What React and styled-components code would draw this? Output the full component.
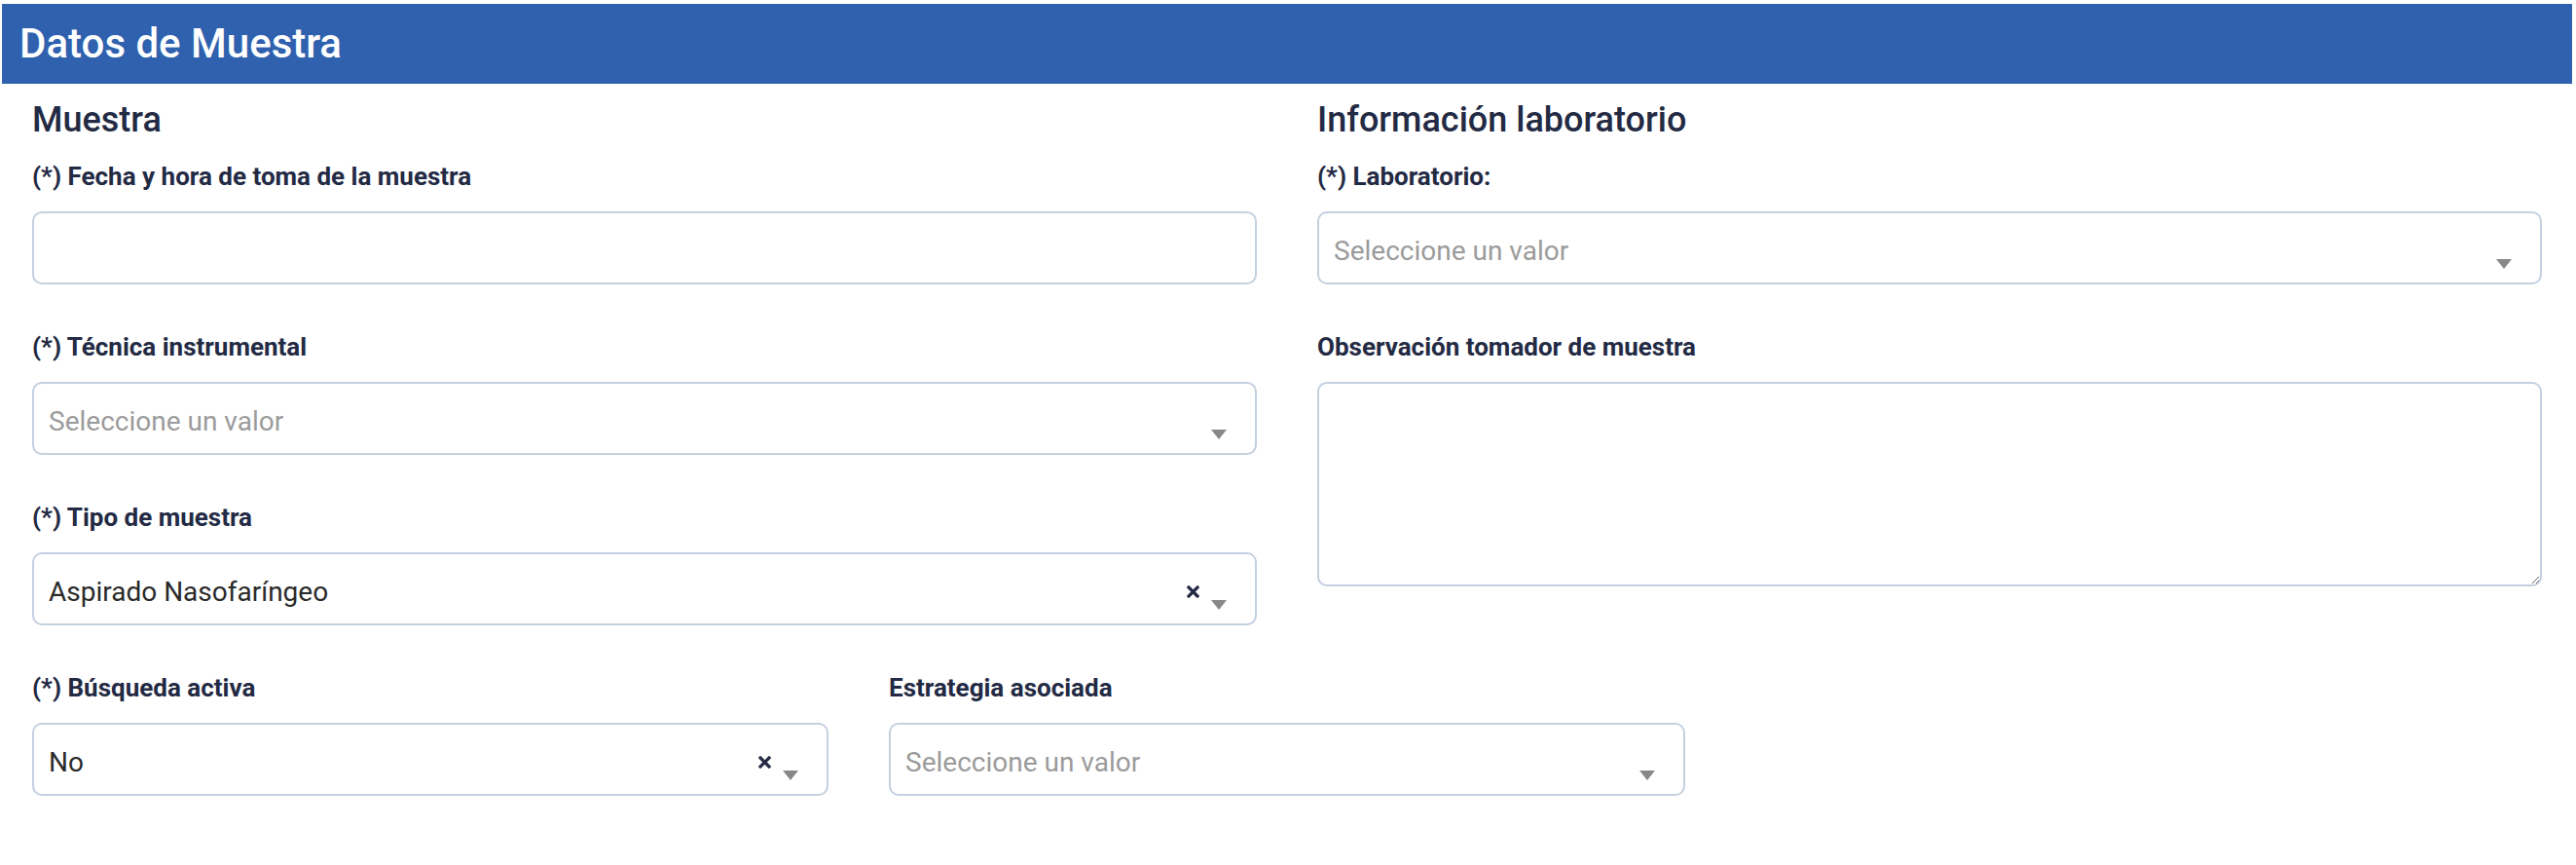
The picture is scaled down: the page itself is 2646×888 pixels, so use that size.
import React from 'react';
import styled, { createGlobalStyle } from 'styled-components';

const GlobalStyle = createGlobalStyle`
  body {
    margin: 0;
    background: #ffffff;
    font-family: Roboto, "Liberation Sans", sans-serif;
  }
  * {
    box-sizing: border-box;
  }
`;

const Page = styled.div`
  margin: 4px 4px 0 2px;
`;

const Banner = styled.div`
  height: 82px;
  background-color: #2f61ae;
  display: flex;
  align-items: center;
  padding-left: 18px;
`;

const BannerTitle = styled.h1`
  margin: 0;
  font-size: 42px;
  font-weight: 500;
  color: #ffffff;
  line-height: 50px;
`;

const Body = styled.div`
  padding: 16px 31px 0 31px;
  display: flex;
  flex-direction: column;
  gap: 49px;
`;

const TwoCols = styled.div`
  display: grid;
  grid-template-columns: 1fr 1fr;
  column-gap: 62px;
  align-items: start;
`;

const ThreeCols = styled.div`
  display: grid;
  grid-template-columns: 1fr 1fr 1fr;
  column-gap: 62px;
`;

const Column = styled.div`
  display: flex;
  flex-direction: column;
`;

const SectionTitle = styled.h2`
  margin: 0 0 22px 0;
  font-size: 36px;
  line-height: 42px;
  font-weight: 500;
  color: #232a44;
`;

const Fields = styled.div`
  display: flex;
  flex-direction: column;
  gap: 49px;
`;

const Field = styled.div`
  display: flex;
  flex-direction: column;
  gap: 21px;
`;

const Label = styled.label`
  font-size: 26px;
  line-height: 30px;
  font-weight: 700;
  color: #232a44;
`;

const TextBox = styled.input`
  height: 75px;
  width: 100%;
  border: 2px solid #c3d0df;
  border-radius: 10px;
  padding: 4px 15px 0;
  font-family: inherit;
  font-size: 28px;
  color: #2a2a2a;
  outline: none;
  background: #fff;
`;

const NoteBox = styled.textarea`
  height: 210px;
  width: 100%;
  border: 2px solid #c3d0df;
  border-radius: 10px;
  padding: 12px 15px;
  font-family: inherit;
  font-size: 28px;
  color: #2a2a2a;
  outline: none;
  resize: vertical;
  display: block;
`;

const SelectBox = styled.div`
  height: 75px;
  border: 2px solid #c3d0df;
  border-radius: 10px;
  background: #fff;
  display: flex;
  align-items: center;
  padding: 0 29px 0 15px;
`;

const SelectValue = styled.span`
  flex: 1;
  margin-top: 6px;
  font-size: 28px;
  font-weight: 400;
  color: ${(p) => (p.$placeholder ? '#9b9b9b' : '#2a2a2a')};
  white-space: nowrap;
  overflow: hidden;
`;

const Clear = styled.span`
  display: flex;
  margin-top: 5px;
  margin-right: 12px;
  cursor: pointer;
`;

const Caret = styled.span`
  width: 0;
  height: 0;
  margin-top: 33px;
  border-left: 8px solid transparent;
  border-right: 8px solid transparent;
  border-top: 10px solid #888888;
`;

const ClearIcon = () => (
  <svg width="13" height="13" viewBox="0 0 13 13">
    <path d="M2 2 L11 11 M11 2 L2 11" stroke="#232a44" strokeWidth="3.2" strokeLinecap="square" />
  </svg>
);

const Select = ({ value, placeholder = 'Seleccione un valor' }) => (
  <SelectBox>
    <SelectValue $placeholder={!value}>{value || placeholder}</SelectValue>
    {value && (
      <Clear>
        <ClearIcon />
      </Clear>
    )}
    <Caret />
  </SelectBox>
);

export default function App() {
  return (
    <>
      <GlobalStyle />
      <Page>
        <Banner>
          <BannerTitle>Datos de Muestra</BannerTitle>
        </Banner>
        <Body>
          <TwoCols>
            <Column>
              <SectionTitle>Muestra</SectionTitle>
              <Fields>
                <Field>
                  <Label>(*) Fecha y hora de toma de la muestra</Label>
                  <TextBox type="text" />
                </Field>
                <Field>
                  <Label>(*) Técnica instrumental</Label>
                  <Select />
                </Field>
                <Field>
                  <Label>(*) Tipo de muestra</Label>
                  <Select value="Aspirado Nasofaríngeo" />
                </Field>
              </Fields>
            </Column>
            <Column>
              <SectionTitle>Información laboratorio</SectionTitle>
              <Fields>
                <Field>
                  <Label>(*) Laboratorio:</Label>
                  <Select />
                </Field>
                <Field>
                  <Label>Observación tomador de muestra</Label>
                  <NoteBox />
                </Field>
              </Fields>
            </Column>
          </TwoCols>
          <ThreeCols>
            <Field>
              <Label>(*) Búsqueda activa</Label>
              <Select value="No" />
            </Field>
            <Field>
              <Label>Estrategia asociada</Label>
              <Select />
            </Field>
          </ThreeCols>
        </Body>
      </Page>
    </>
  );
}
